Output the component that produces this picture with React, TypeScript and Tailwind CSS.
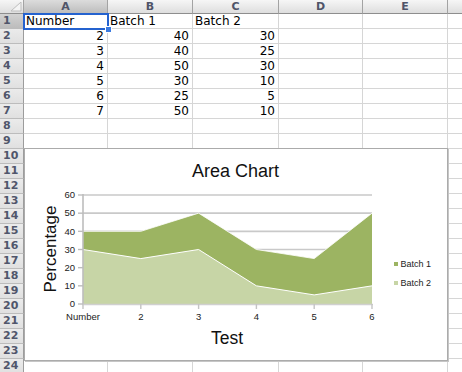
import React from "react";

const cols = [
  { key: "A", w: "w-[84px]" },
  { key: "B", w: "w-[85px]" },
  { key: "C", w: "w-[86px]" },
  { key: "D", w: "w-[84px]" },
  { key: "E", w: "w-[85px]" },
];

// cell contents, rows 1..7
const cells: Record<number, (string | number)[]> = {
  1: ["Number", "Batch 1", "Batch 2"],
  2: [2, 40, 30],
  3: [3, 40, 25],
  4: [4, 50, 30],
  5: [5, 30, 10],
  6: [6, 25, 5],
  7: [7, 50, 10],
};

const batch1 = [40, 40, 50, 30, 25, 50];
const batch2 = [30, 25, 30, 10, 5, 10];
const xs = [83, 140.8, 198.6, 256.4, 314.2, 372];
const yOf = (v: number) => 304 - (v * 109) / 60;

const AreaChart = () => {
  const top1 = xs.map((x, i) => `${x},${yOf(batch1[i])}`).join(" ");
  const top2 = xs.map((x, i) => `${x},${yOf(batch2[i])}`).join(" ");
  return (
    <svg width={422} height={211} viewBox="25 149 422 211" className="block">
      <text x={235.5} y={176.5} fontSize={18} textAnchor="middle" fill="#111" fontFamily="'Liberation Sans', Arial, sans-serif">
        Area Chart
      </text>
      {/* gridlines */}
      {[60, 50, 40, 30, 20, 10].map((v) => (
        <line key={v} x1={83} x2={372} y1={yOf(v)} y2={yOf(v)} stroke="#c9c9c9" strokeWidth={1.6} />
      ))}
      <polygon points={`83,304 ${top1} 372,304`} fill="#9cb462" />
      <polyline points={top1} fill="none" stroke="#ffffff" strokeWidth={0.8} />
      <polygon points={`83,304 ${top2} 372,304`} fill="#c7d5a6" />
      <polyline points={top2} fill="none" stroke="#ffffff" strokeWidth={1} />
      {/* axes */}
      <line x1={83} x2={83} y1={194} y2={305} stroke="#bdbdbd" strokeWidth={1.6} />
      <line x1={82} x2={373} y1={304.5} y2={304.5} stroke="#d0d0d0" strokeWidth={1.4} />
      {[60, 50, 40, 30, 20, 10, 0].map((v) => (
        <g key={v}>
          <line x1={78} x2={83} y1={yOf(v)} y2={yOf(v)} stroke="#bdbdbd" strokeWidth={1.4} />
          <text x={75} y={yOf(v) + 3.3} fontSize={9.5} textAnchor="end" fill="#222" fontFamily="'Liberation Sans', Arial, sans-serif">
            {v}
          </text>
        </g>
      ))}
      {xs.map((x, i) => (
        <g key={x}>
          <line x1={x} x2={x} y1={304} y2={309} stroke="#c4c4c4" strokeWidth={1.4} />
          <text x={x} y={320} fontSize={9.5} textAnchor="middle" fill="#222" fontFamily="'Liberation Sans', Arial, sans-serif">
            {i === 0 ? "Number" : i + 1}
          </text>
        </g>
      ))}
      <text x={227} y={344} fontSize={17.5} textAnchor="middle" fill="#111" fontFamily="'Liberation Sans', Arial, sans-serif">
        Test
      </text>
      <text transform="translate(55.5,249) rotate(-90)" fontSize={17} textAnchor="middle" fill="#111" fontFamily="'Liberation Sans', Arial, sans-serif">
        Percentage
      </text>
      {/* legend */}
      <rect x={394} y={262} width={4} height={4} fill="#9cb462" />
      <text x={400.5} y={267} fontSize={9} fill="#222" fontFamily="'Liberation Sans', Arial, sans-serif">
        Batch 1
      </text>
      <rect x={394} y={281} width={4} height={4} fill="#c7d5a6" />
      <text x={400.5} y={286} fontSize={9} fill="#222" fontFamily="'Liberation Sans', Arial, sans-serif">
        Batch 2
      </text>
    </svg>
  );
};

export default function App() {
  const rows = Array.from({ length: 24 }, (_, i) => i + 1);
  return (
    <div className="relative w-[462px] h-[372px] overflow-hidden bg-white font-['DejaVu_Sans',sans-serif] text-black">
      {/* column headers */}
      <div className="flex h-[14px]">
        <div className="w-[24px] shrink-0 flex items-end justify-end pr-[1px] pb-[1px] border-r border-b border-r-[#a3a3a3] border-b-[#8e8e8e] bg-linear-to-b from-[#f6f6f6] to-[#dedede]">
          <svg width="11" height="10" viewBox="0 0 11 10">
            <polygon points="10,0 10,9 0,9" fill="#f4f4f4" stroke="#bdbdbd" strokeWidth="1" />
          </svg>
        </div>
        {cols.map((c) => (
          <div
            key={c.key}
            className={`${c.w} shrink-0 flex items-center justify-center border-r border-b border-r-[#a3a3a3] border-b-[#8e8e8e] text-[11px] leading-none font-bold text-[#4f5468] ${
              c.key === "A" ? "bg-linear-to-b from-[#dcdcdc] to-[#bdbdbd]" : "bg-linear-to-b from-[#f6f6f6] to-[#dedede]"
            }`}
          >
            {c.key}
          </div>
        ))}
        <div className="flex-1 border-b border-b-[#8e8e8e] bg-linear-to-b from-[#f6f6f6] to-[#dedede]" />
      </div>

      {/* grid rows */}
      {rows.map((r) => (
        <div key={r} className="flex h-[15px]">
          <div
            className={`w-[24px] shrink-0 pl-[3px] border-r border-b border-r-[#9c9c9c] border-b-[#bcbcbc] text-[11px] leading-[14px] font-bold text-[#50566b] ${
              r === 1 ? "bg-linear-to-b from-[#d2d2d2] to-[#bcbcbc]" : "bg-linear-to-b from-[#ebebeb] to-[#e0e0e0]"
            }`}
          >
            {r}
          </div>
          {cols.map((c, ci) => {
            const v = cells[r]?.[ci];
            const isNum = typeof v === "number";
            return (
              <div
                key={c.key}
                className={`${c.w} shrink-0 border-r border-b border-[#d6d6d6] text-[12px] leading-[14px] whitespace-nowrap overflow-hidden ${
                  isNum ? "text-right pr-[3px]" : "pl-[2px]"
                }`}
              >
                {v}
              </div>
            );
          })}
          <div className="flex-1 border-b border-[#d6d6d6]" />
        </div>
      ))}

      {/* selected cell A1 */}
      <div className="absolute left-[23px] top-[13px] w-[86px] h-[17px] border-2 border-[#2462cf]" />
      <div className="absolute left-[105px] top-[26px] w-[7px] h-[7px] bg-[#3a7ae0] border border-white" />

      {/* embedded chart */}
      <div className="absolute left-[24px] top-[148px] w-[424px] h-[213px] bg-white border border-[#ababab] shadow-[1px_1px_0_#c6c6c6]">
        <AreaChart />
      </div>
    </div>
  );
}
